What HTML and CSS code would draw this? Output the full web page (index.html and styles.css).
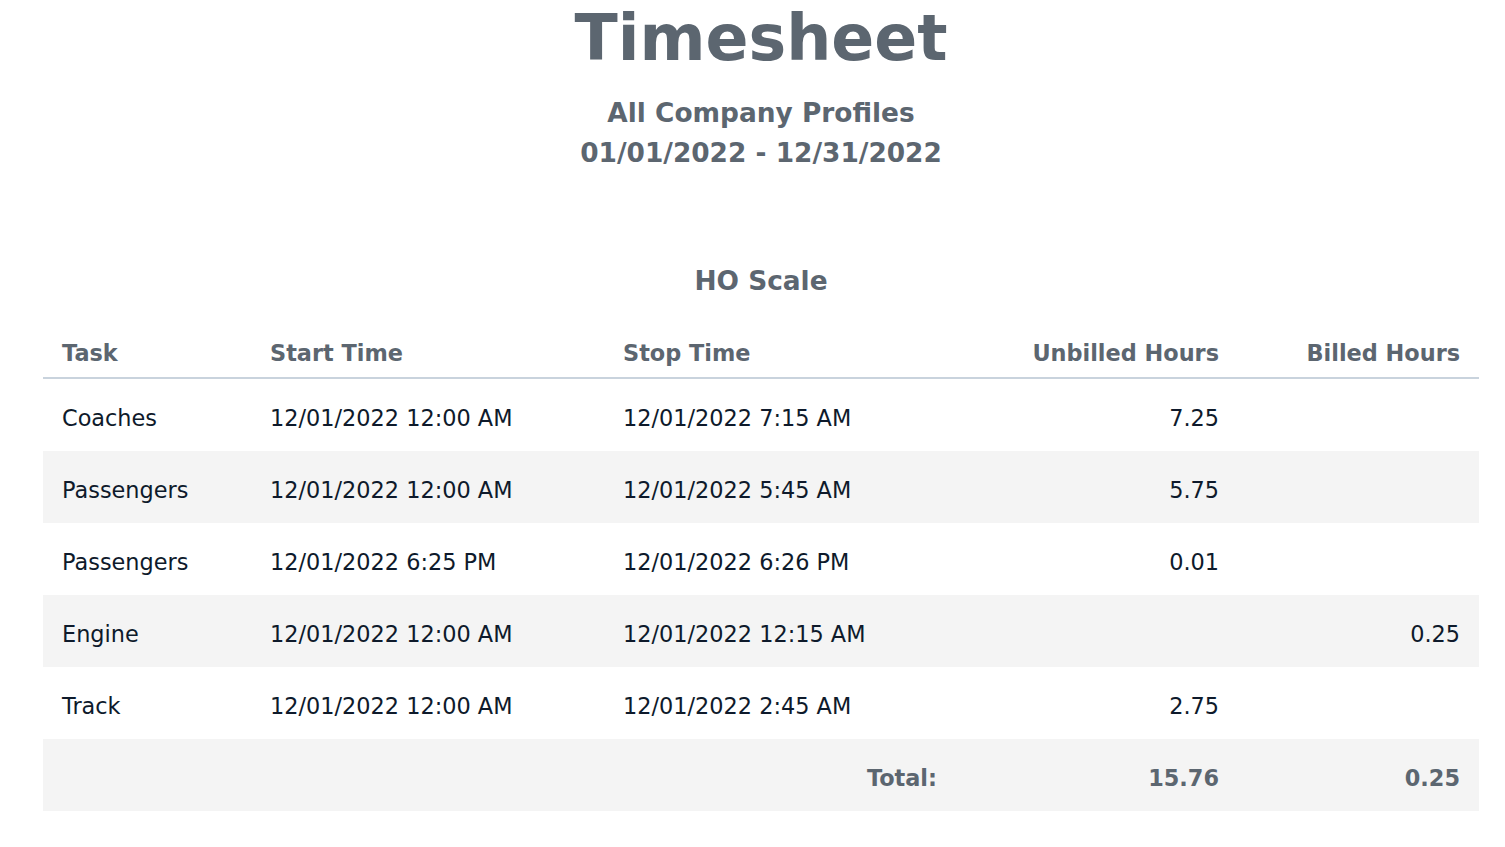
FILE: index.html
```html
<!DOCTYPE html>
<html>
<head>
<meta charset="utf-8">
<title>Timesheet</title>
<link rel="stylesheet" href="styles.css">
</head>
<body>
<div class="page">
  <header class="report-head">
    <h1 class="title">Timesheet</h1>
    <div class="subtitle">
      <div>All Company Profiles</div>
      <div>01/01/2022 - 12/31/2022</div>
    </div>
  </header>
  <section class="group">
    <h2 class="group-title">HO Scale</h2>
    <table class="sheet">
      <colgroup>
        <col class="c-task"><col class="c-start"><col class="c-stop"><col class="c-unb"><col class="c-bill">
      </colgroup>
      <thead>
        <tr><th>Task</th><th>Start Time</th><th>Stop Time</th><th class="num">Unbilled Hours</th><th class="num">Billed Hours</th></tr>
      </thead>
      <tbody>
        <tr><td>Coaches</td><td>12/01/2022 12:00 AM</td><td>12/01/2022 7:15 AM</td><td class="num">7.25</td><td class="num"></td></tr>
        <tr class="alt"><td>Passengers</td><td>12/01/2022 12:00 AM</td><td>12/01/2022 5:45 AM</td><td class="num">5.75</td><td class="num"></td></tr>
        <tr><td>Passengers</td><td>12/01/2022 6:25 PM</td><td>12/01/2022 6:26 PM</td><td class="num">0.01</td><td class="num"></td></tr>
        <tr class="alt"><td>Engine</td><td>12/01/2022 12:00 AM</td><td>12/01/2022 12:15 AM</td><td class="num"></td><td class="num">0.25</td></tr>
        <tr><td>Track</td><td>12/01/2022 12:00 AM</td><td>12/01/2022 2:45 AM</td><td class="num">2.75</td><td class="num"></td></tr>
        <tr class="alt total"><td></td><td></td><td class="num">Total:</td><td class="num">15.76</td><td class="num">0.25</td></tr>
      </tbody>
    </table>
  </section>
</div>
</body>
</html>
```

FILE: styles.css
```css
html, body {
  margin: 0;
  padding: 0;
  background: #ffffff;
}
body {
  font-family: "DejaVu Sans", "Liberation Sans", sans-serif;
  color: #0e1a2b;
}
.page {
  width: 1436px;
  padding-left: 43px;
}
.report-head {
  text-align: center;
  color: #5c6670;
}
.title {
  margin: 0;
  font-size: 63.4px;
  line-height: 77px;
  font-weight: bold;
}
.subtitle {
  margin-top: 16px;
  font-size: 26.4px;
  line-height: 40px;
  font-weight: bold;
}
.group-title {
  margin: 88px 0 25px;
  text-align: center;
  color: #5c6670;
  font-size: 26.4px;
  line-height: 40px;
  font-weight: bold;
}
.sheet {
  width: 1436px;
  table-layout: fixed;
  border-collapse: separate;
  border-spacing: 0;
  font-size: 22.4px;
  line-height: 34px;
}
.c-task { width: 208px; }
.c-start { width: 353px; }
.c-stop { width: 352px; }
.c-unb { width: 282px; }
.c-bill { width: 241px; }
.sheet th {
  text-align: left;
  font-weight: bold;
  color: #5c6670;
  padding: 10px 19px 7px;
  border-bottom: 2px solid #c9d3dd;
  white-space: nowrap;
}
.sheet td {
  padding: 22px 19px 16px;
  white-space: nowrap;
}
.sheet .num {
  text-align: right;
}
.sheet tr.alt td {
  background: #f4f4f4;
}
.sheet tr.total td {
  font-weight: bold;
  color: #5c6670;
}
```
